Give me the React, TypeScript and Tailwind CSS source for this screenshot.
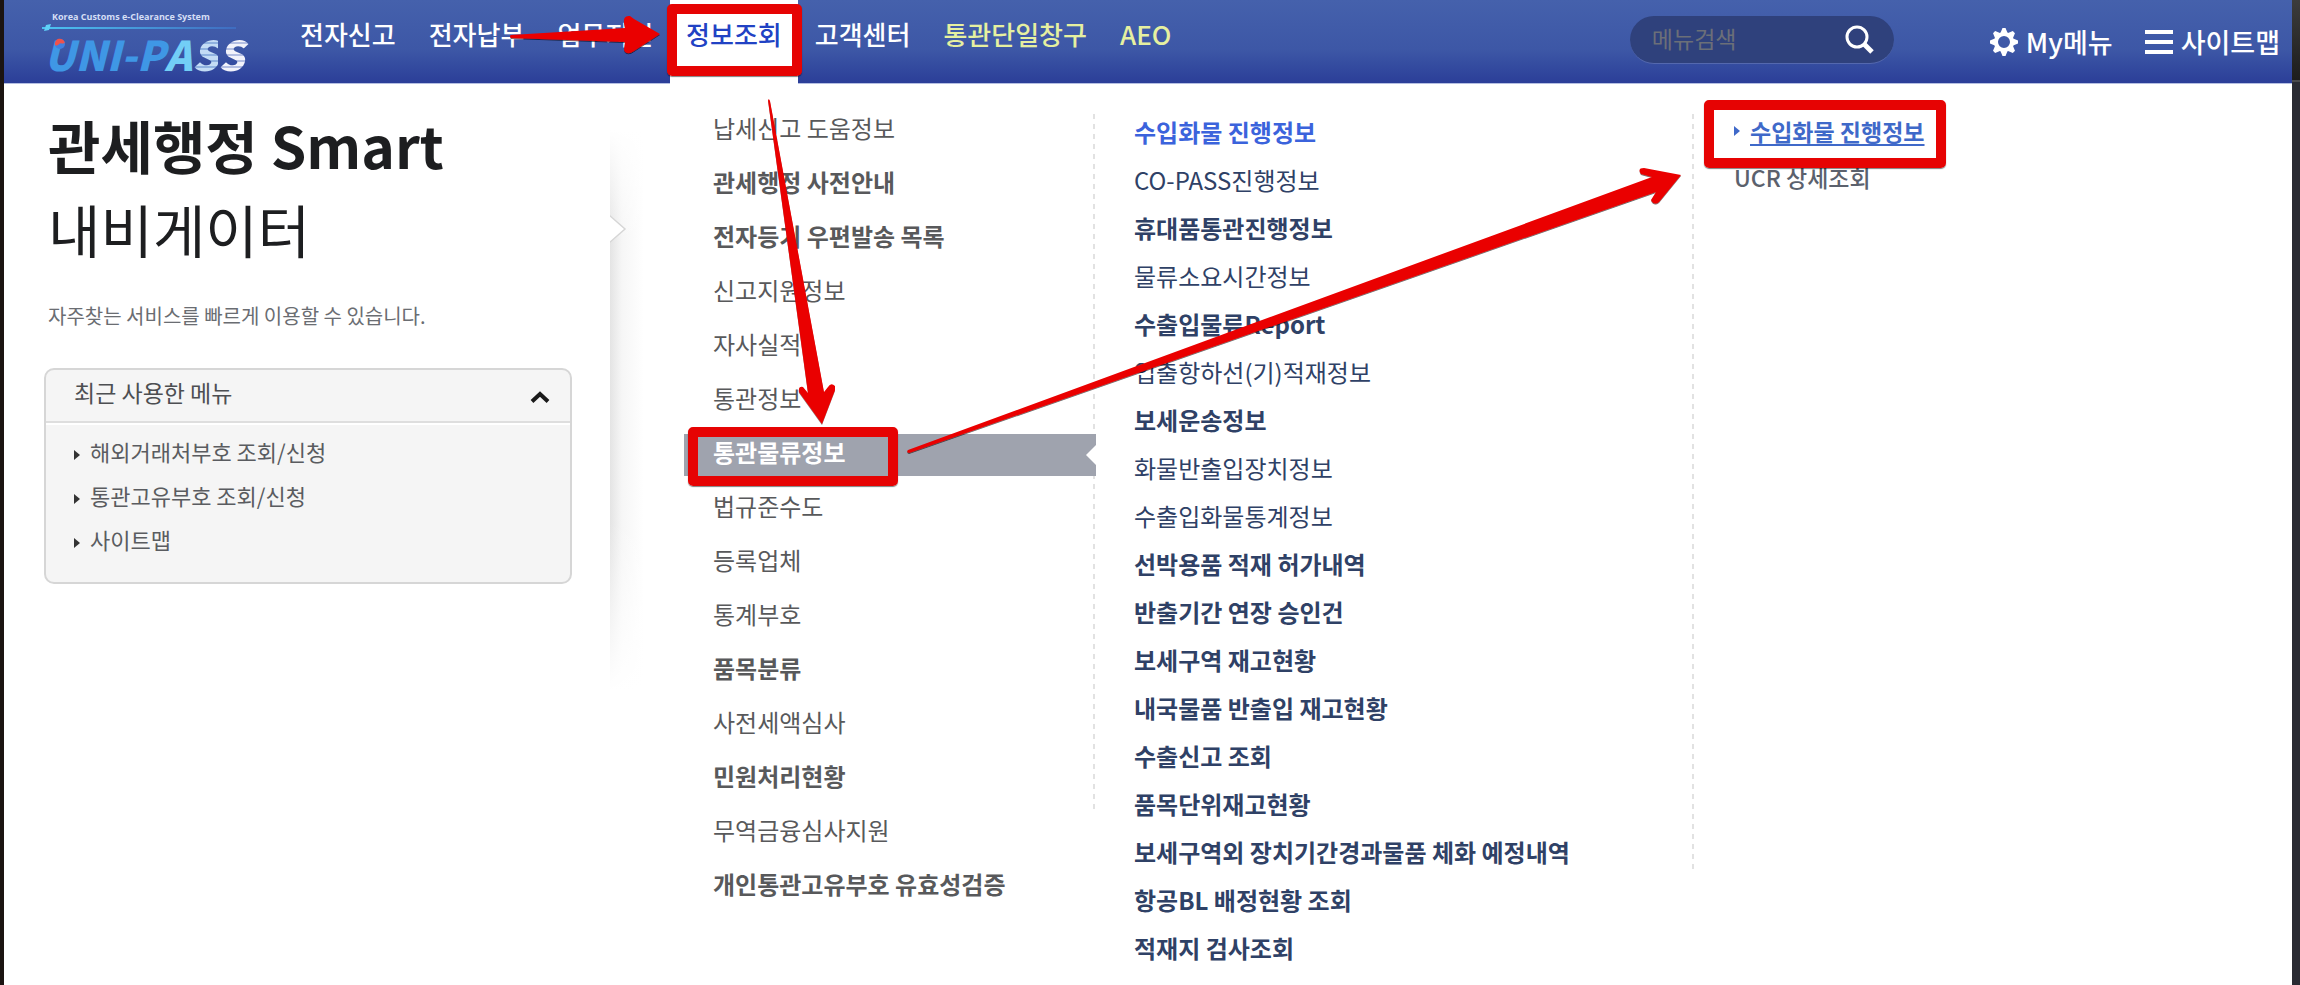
import React, { useState } from 'react';

type MenuItem = { label: string; bold?: boolean };

// Top navigation
const mainNav = [
  { label: '전자신고', className: 'text-white' },
  { label: '전자납부', className: 'text-white' },
  { label: '업무지원', className: 'text-white' },
  { label: '정보조회', active: true, className: 'bg-white text-[#2142c4] font-bold' },
  { label: '고객센터', className: 'text-white' },
  { label: '통관단일창구', className: 'text-[#e6f0a0]' },
  { label: 'AEO', className: 'text-[#e6f0a0]' },
];

const recentMenus = ['해외거래처부호 조회/신청', '통관고유부호 조회/신청', '사이트맵'];

// Second level of "정보조회"
const infoMenu: MenuItem[] = [
  { label: '납세신고 도움정보' },
  { label: '관세행정 사전안내', bold: true },
  { label: '전자등기 우편발송 목록', bold: true },
  { label: '신고지원정보' },
  { label: '자사실적' },
  { label: '통관정보' },
  { label: '통관물류정보', bold: true },
  { label: '법규준수도' },
  { label: '등록업체' },
  { label: '통계부호' },
  { label: '품목분류', bold: true },
  { label: '사전세액심사' },
  { label: '민원처리현황', bold: true },
  { label: '무역금융심사지원' },
  { label: '개인통관고유부호 유효성검증', bold: true },
];

// Third level of "통관물류정보"
const logisticsMenu: MenuItem[] = [
  { label: '수입화물 진행정보', bold: true },
  { label: 'CO-PASS진행정보' },
  { label: '휴대품통관진행정보', bold: true },
  { label: '물류소요시간정보' },
  { label: '수출입물류Report', bold: true },
  { label: '입출항하선(기)적재정보' },
  { label: '보세운송정보', bold: true },
  { label: '화물반출입장치정보' },
  { label: '수출입화물통계정보' },
  { label: '선박용품 적재 허가내역', bold: true },
  { label: '반출기간 연장 승인건', bold: true },
  { label: '보세구역 재고현황', bold: true },
  { label: '내국물품 반출입 재고현황', bold: true },
  { label: '수출신고 조회', bold: true },
  { label: '품목단위재고현황', bold: true },
  { label: '보세구역외 장치기간경과물품 체화 예정내역', bold: true },
  { label: '항공BL 배정현황 조회', bold: true },
  { label: '적재지 검사조회', bold: true },
];

const Logo: React.FC = () => (
  <a href="#" aria-label="UNI-PASS" className="relative block w-[200px] shrink-0">
    <span className="block pl-3 text-[9px] leading-[14px] font-bold text-[#d5def5] font-['Open_Sans',sans-serif]">
      Korea Customs e-Clearance System
    </span>
    <svg className="block h-2 w-full" viewBox="0 0 200 8" aria-hidden="true">
      <defs>
        <linearGradient id="logoLine" x1="0" x2="1">
          <stop offset="0" stopColor="#4cc3f2" />
          <stop offset="1" stopColor="#3f6cc0" />
        </linearGradient>
      </defs>
      <rect x="2" y="3" width="194" height="2" fill="url(#logoLine)" />
      <path d="M4 7 6 1l5-1-2 6z" fill="#5fd0f7" />
    </svg>
    <span className="flex whitespace-nowrap pl-1 text-[41px] leading-[42px] font-black italic text-[#3f97e5] font-['Noto_Sans_CJK_KR',sans-serif]">
      <span>UNI-P</span>
      <span className="text-[#72cef6]">A</span>
      <span className="bg-[repeating-linear-gradient(#c3dcf5_0_4px,#8fb2e0_4px_6px)] bg-clip-text text-transparent">S</span>
      <span className="bg-[repeating-linear-gradient(#f2f3fb_0_4px,#b4bfe3_4px_6px)] bg-clip-text pr-2 text-transparent">S</span>
    </span>
    <svg className="absolute left-[14px] top-[28px] size-3" viewBox="0 0 12 12" aria-hidden="true">
      <circle cx="6" cy="6" r="5" fill="#3f7fe0" />
      <path d="M1 7a5 5 0 0 1 9.800-2.500C9 7 7 4 5 6 4 7.500 2 8 1 7z" fill="#f0524b" />
    </svg>
  </a>
);

const GearIcon: React.FC = () => (
  <svg className="h-[28px] w-[28px]" viewBox="0 0 28 28" aria-hidden="true">
    <g fill="#fff">
      {[0, 45, 90, 135, 180, 225, 270, 315].map((angle) => (
        <path key={angle} d="M10 6 12.500 0h3L18 6z" transform={`rotate(${angle} 14 14)`} />
      ))}
    </g>
    <circle cx="14" cy="14" r="8" fill="none" stroke="#fff" strokeWidth="4" />
  </svg>
);

const Triangle: React.FC<{ className?: string }> = ({ className }) => (
  <svg className={className} width="6" height="10" viewBox="0 0 6 10" fill="currentColor" aria-hidden="true">
    <path d="M0 0 6 5 0 10z" />
  </svg>
);

// Red frame drawn round a highlighted menu entry
const Marker: React.FC<{ className: string }> = ({ className }) => (
  <span
    aria-hidden="true"
    className={`pointer-events-none absolute z-10 rounded-[5px] border-10 border-[#e60303] shadow-[0_1px_1px_rgba(0,0,0,0.5)] ${className}`}
  />
);

const GuideArrows: React.FC = () => (
  <svg
    className="pointer-events-none absolute left-0 top-0 z-20 h-[985px] w-[2300px]"
    viewBox="0 0 2300 985"
    aria-hidden="true"
  >
    <defs>
      <filter id="arrowShadow" x="-5%" y="-20%" width="110%" height="150%">
        <feDropShadow dx="0" dy="1" stdDeviation="0.6" floodColor="#000" floodOpacity="0.6" />
      </filter>
    </defs>
    <g fill="#ea0404" filter="url(#arrowShadow)">
      <path d="M511 35 625 28 624 23Q623 15 630 16L634 19 660 34 634 51Q627 56 624 50L625 42 511 38Q509 36 511 35Z" />
      <path d="M768 100Q769 98 770 101L824 392 828 387Q831 382 835 386L835 390 822 424 799 392Q798 386 803 387L808 393Z" />
      <path d="M908 450 1652 177 1641 174Q1637 168 1644 168L1681 175 1659 202Q1654 206 1651 200L1656 192 909 453Q906 452 908 450Z" />
    </g>
  </svg>
);

const DashedLine: React.FC<{ className: string }> = ({ className }) => (
  <div
    className={`w-[2px] shrink-0 bg-[repeating-linear-gradient(#e2e2e2_0_5px,transparent_5px_10px)] ${className}`}
  />
);

const App: React.FC = () => {
  const [keyword, setKeyword] = useState('');
  const [recentOpen, setRecentOpen] = useState(true);

  return (
    <div className="relative flex min-h-screen overflow-hidden bg-white font-['Noto_Sans_CJK_KR',sans-serif]">
      {/* Left window edge */}
      <div className="w-1 shrink-0 bg-[#1b1411]" />

      <div className="min-w-0 flex-1">
        {/* Header */}
        <header className="flex h-[84px] border-b border-[#b5bfe2] bg-linear-to-b from-[#4561ac] via-[#3d57a6] via-60% to-[#2b3e98]">
          <div className="w-[280px] shrink-0 pl-9 pt-[10px]">
            <Logo />
          </div>
          <nav className="flex gap-px">
            {mainNav.map((item) => (
              <a
                key={item.label}
                href="#"
                className={`relative h-[84px] whitespace-nowrap px-4 pt-[14px] text-[26px] leading-[40px] font-medium ${item.className}`}
              >
                {item.label}
                {item.active && <Marker className="-left-[3px] top-1 h-[72px] w-[135px]" />}
              </a>
            ))}
          </nav>

          <div className="ml-auto flex items-start pr-3">
            <form className="mt-4 flex h-12 w-[264px] items-center rounded-full border-b border-[#5468ae] bg-[#2f417c] pl-[22px] pr-5">
              <input
                aria-label="메뉴검색"
                value={keyword}
                onChange={(e) => setKeyword(e.target.value)}
                placeholder="메뉴검색"
                className="h-10 min-w-0 flex-1 bg-transparent pb-1 text-[23px] text-white outline-none placeholder:text-[#6b6f78]"
              />
              <button type="button" aria-label="검색">
                <svg className="size-[30px]" viewBox="0 0 30 30" fill="none" stroke="#fff" aria-hidden="true">
                  <circle cx="13" cy="12" r="10" strokeWidth="3" />
                  <path d="m20 19 8 8" strokeWidth="5" />
                </svg>
              </button>
            </form>
            <button type="button" className="ml-24 mt-[22px] flex items-center gap-2 text-[27px] leading-10 font-medium text-white">
              <GearIcon />
              My메뉴
            </button>
            <button type="button" className="ml-8 mt-[22px] flex items-center gap-2 text-[27px] leading-10 font-medium text-white">
              <svg className="h-6 w-7" viewBox="0 0 28 24" fill="#fff" aria-hidden="true">
                <path d="M0 0h28v4H0zM0 10h28v4H0zM0 20h28v4H0z" />
              </svg>
              사이트맵
            </button>
          </div>
        </header>

        <main className="flex">
          {/* Smart navigator */}
          <aside className="w-[606px] shrink-0 pl-10 pt-[18px]">
            <h1 className="pl-1 text-[57px] leading-[84px] text-[#1d1e20]">
              <strong className="block font-bold">관세행정 Smart</strong>
              내비게이터
            </h1>
            <p className="mt-[30px] pl-1 text-[20px] leading-8 text-[#6a6d72]">
              자주찾는 서비스를 빠르게 이용할 수 있습니다.
            </p>

            <section className="mt-9 h-[216px] w-[528px] rounded-[10px] border-2 border-[#d6d6d6] bg-[#f5f5f5]">
              <button
                type="button"
                aria-expanded={recentOpen}
                onClick={() => setRecentOpen(!recentOpen)}
                className="flex h-[53px] w-full items-center justify-between border-b-2 border-[#dedede] pl-7 pr-5 pb-1.5 text-[23px] text-[#4d4f52]"
              >
                최근 사용한 메뉴
                <svg className="mt-2 h-3 w-5" viewBox="0 0 20 12" fill="none" stroke="#1a1a1a" strokeWidth="4" aria-hidden="true">
                  <path d="M2 10.500 10 3l8 7.500" />
                </svg>
              </button>
              {recentOpen && (
                <ul className="border-t-2 border-white pt-1">
                  {recentMenus.map((menu) => (
                    <li key={menu}>
                      <a href="#" className="flex items-center gap-[10px] pl-7 text-[22px] leading-[44px] text-[#5a5c60]">
                        <Triangle className="mt-2 text-[#333]" />
                        {menu}
                      </a>
                    </li>
                  ))}
                </ul>
              )}
            </section>
          </aside>

          {/* Shadow between the navigator and the menu */}
          <svg className="mt-[46px] h-[560px] w-[74px] shrink-0" viewBox="0 0 74 560" aria-hidden="true">
            <defs>
              <linearGradient id="edge" x1="0" x2="1">
                <stop offset="0" stopColor="#e4e4e4" />
                <stop offset="0.35" stopColor="#f6f6f6" />
                <stop offset="1" stopColor="#fff" />
              </linearGradient>
              <linearGradient id="fade" x1="0" x2="0" y1="0" y2="1">
                <stop offset="0" stopColor="#fff" />
                <stop offset="0.2" stopColor="#fff" stopOpacity="0" />
                <stop offset="0.7" stopColor="#fff" stopOpacity="0" />
                <stop offset="1" stopColor="#fff" />
              </linearGradient>
            </defs>
            <rect width="34" height="560" fill="url(#edge)" />
            <rect width="34" height="560" fill="url(#fade)" />
            <path d="M-1 85 15 99-1 113" fill="#fff" stroke="#d6d6d6" strokeWidth="1.500" />
          </svg>

          <div className="grid min-w-0 flex-1 grid-cols-[412fr_598fr_598fr]">
            {/* Second level */}
            <div className="flex min-w-0 pr-px">
              <ul className="min-w-0 flex-1 pt-[14px]">
                {infoMenu.map((item) => {
                  const selected = item.label === '통관물류정보';
                  return (
                    <li key={item.label} className="flex h-[54px] items-end">
                      <a
                        href="#"
                        className={`relative block whitespace-nowrap pb-1.5 pl-[29px] text-[24px] leading-[36px] ${
                          item.bold ? 'font-bold' : ''
                        } ${selected ? '-mr-[3px] flex-1 bg-[#9fa3ae] text-white' : 'text-[#58595b]'}`}
                      >
                        {item.label}
                        {selected && (
                          <>
                            <Marker className="-top-[7px] left-1 h-[59px] w-[210px]" />
                            <svg className="absolute right-0 top-[11px] h-5 w-[10px]" viewBox="0 0 10 20" aria-hidden="true">
                              <path d="M10 0 0 10l10 10z" fill="#fff" />
                            </svg>
                          </>
                        )}
                      </a>
                    </li>
                  );
                })}
              </ul>
              <DashedLine className="mt-[30px] h-[696px]" />
            </div>

            {/* Third level */}
            <div className="flex min-w-0">
              <ul className="min-w-0 flex-1 pl-[38px] pt-6">
                {logisticsMenu.map((item, index) => (
                  <li key={item.label}>
                    <a
                      href="#"
                      className={`whitespace-nowrap text-[24px] leading-[48px] ${item.bold ? 'font-bold' : ''} ${
                        index === 0 ? 'text-[#3b63dc]' : 'text-[#2f4166]'
                      }`}
                    >
                      {item.label}
                    </a>
                  </li>
                ))}
              </ul>
              <DashedLine className="mt-[30px] h-[756px]" />
            </div>

            {/* Fourth level */}
            <ul className="pl-10 pt-6 text-[23px] leading-[46px] font-medium">
              <li className="relative">
                <a href="#" className="flex items-center gap-[10px] text-[#3f69c9]">
                  <Triangle />
                  <span className="font-bold underline decoration-2 underline-offset-3">수입화물 진행정보</span>
                </a>
                <Marker className="-left-[30px] -top-2 h-[68px] w-[242px]" />
              </li>
              <li>
                <a href="#" className="text-[#5b616d]">UCR 상세조회</a>
              </li>
            </ul>
          </div>
        </main>
      </div>

      {/* Right window edge */}
      <div className="w-2 shrink-0 bg-[#2a2b33]">
        <div className="h-[82px] border-b-2 border-[#4a4a4c] bg-linear-to-b from-[#3c3c3c] to-[#1d1d1d]" />
      </div>

      <GuideArrows />
    </div>
  );
};

export default App;
